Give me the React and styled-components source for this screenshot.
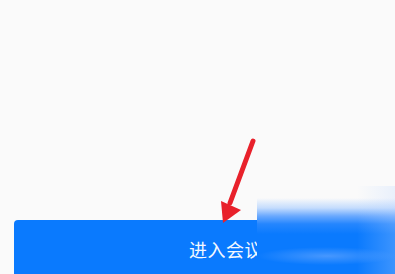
import React from "react";
import styled, { createGlobalStyle } from "styled-components";

const Global = createGlobalStyle`
  html, body { margin: 0; padding: 0; background: #fafafa; overflow: hidden; }
  body { font-family: "Noto Sans CJK SC", "Noto Sans", sans-serif; }
`;

const Page = styled.div`
  position: relative;
  width: 395px;
  height: 274px;
  overflow: hidden;
  background: #fafafa;
  display: flex;
  flex-direction: column;
`;

const Spacer = styled.div`
  flex: 0 0 220px;
`;

const EnterButton = styled.button`
  flex: 0 0 58px;
  margin-left: 14px;
  width: 424px;
  border: none;
  border-radius: 4px;
  background: #0a7afe;
  color: #f4f8ff;
  font-family: "Noto Sans CJK SC", "Noto Sans", sans-serif;
  font-size: 18px;
  letter-spacing: 0.5px;
  display: flex;
  align-items: center;
  justify-content: center;
  padding: 0;
`;

const Mosaic = styled.div`
  position: absolute;
  left: 257px;
  top: 186px;
  right: 0;
  bottom: 0;
  background:
    radial-gradient(ellipse 70px 9px at 70px 70px, rgba(120, 175, 255, 0.55), rgba(120, 175, 255, 0)),
    linear-gradient(to right, rgba(250, 250, 250, 0) 0, rgba(250, 250, 250, 0) 100px, rgba(190, 215, 255, 0.28) 138px),
    linear-gradient(
      to bottom,
      #fafafa 0px,
      #fafafa 12px,
      #c4dcfd 22px,
      #6aa9fe 30px,
      #2586fe 38px,
      #0a7afe 48px,
      #0a7afe 100%
    );
`;

const Arrow = styled.svg`
  position: absolute;
  left: 215px;
  top: 135px;
  width: 45px;
  height: 92px;
  overflow: visible;
`;

export default function App() {
  return (
    <>
      <Global />
      <Page>
        <Spacer />
        <EnterButton>进入会议</EnterButton>
        <Mosaic />
        <Arrow viewBox="0 0 45 92">
          <line x1="38" y1="6" x2="15" y2="68" stroke="#e8212b" strokeWidth="5" strokeLinecap="round" />
          <polygon points="6,66 26,75 8,88" fill="#e8212b" />
        </Arrow>
      </Page>
    </>
  );
}
